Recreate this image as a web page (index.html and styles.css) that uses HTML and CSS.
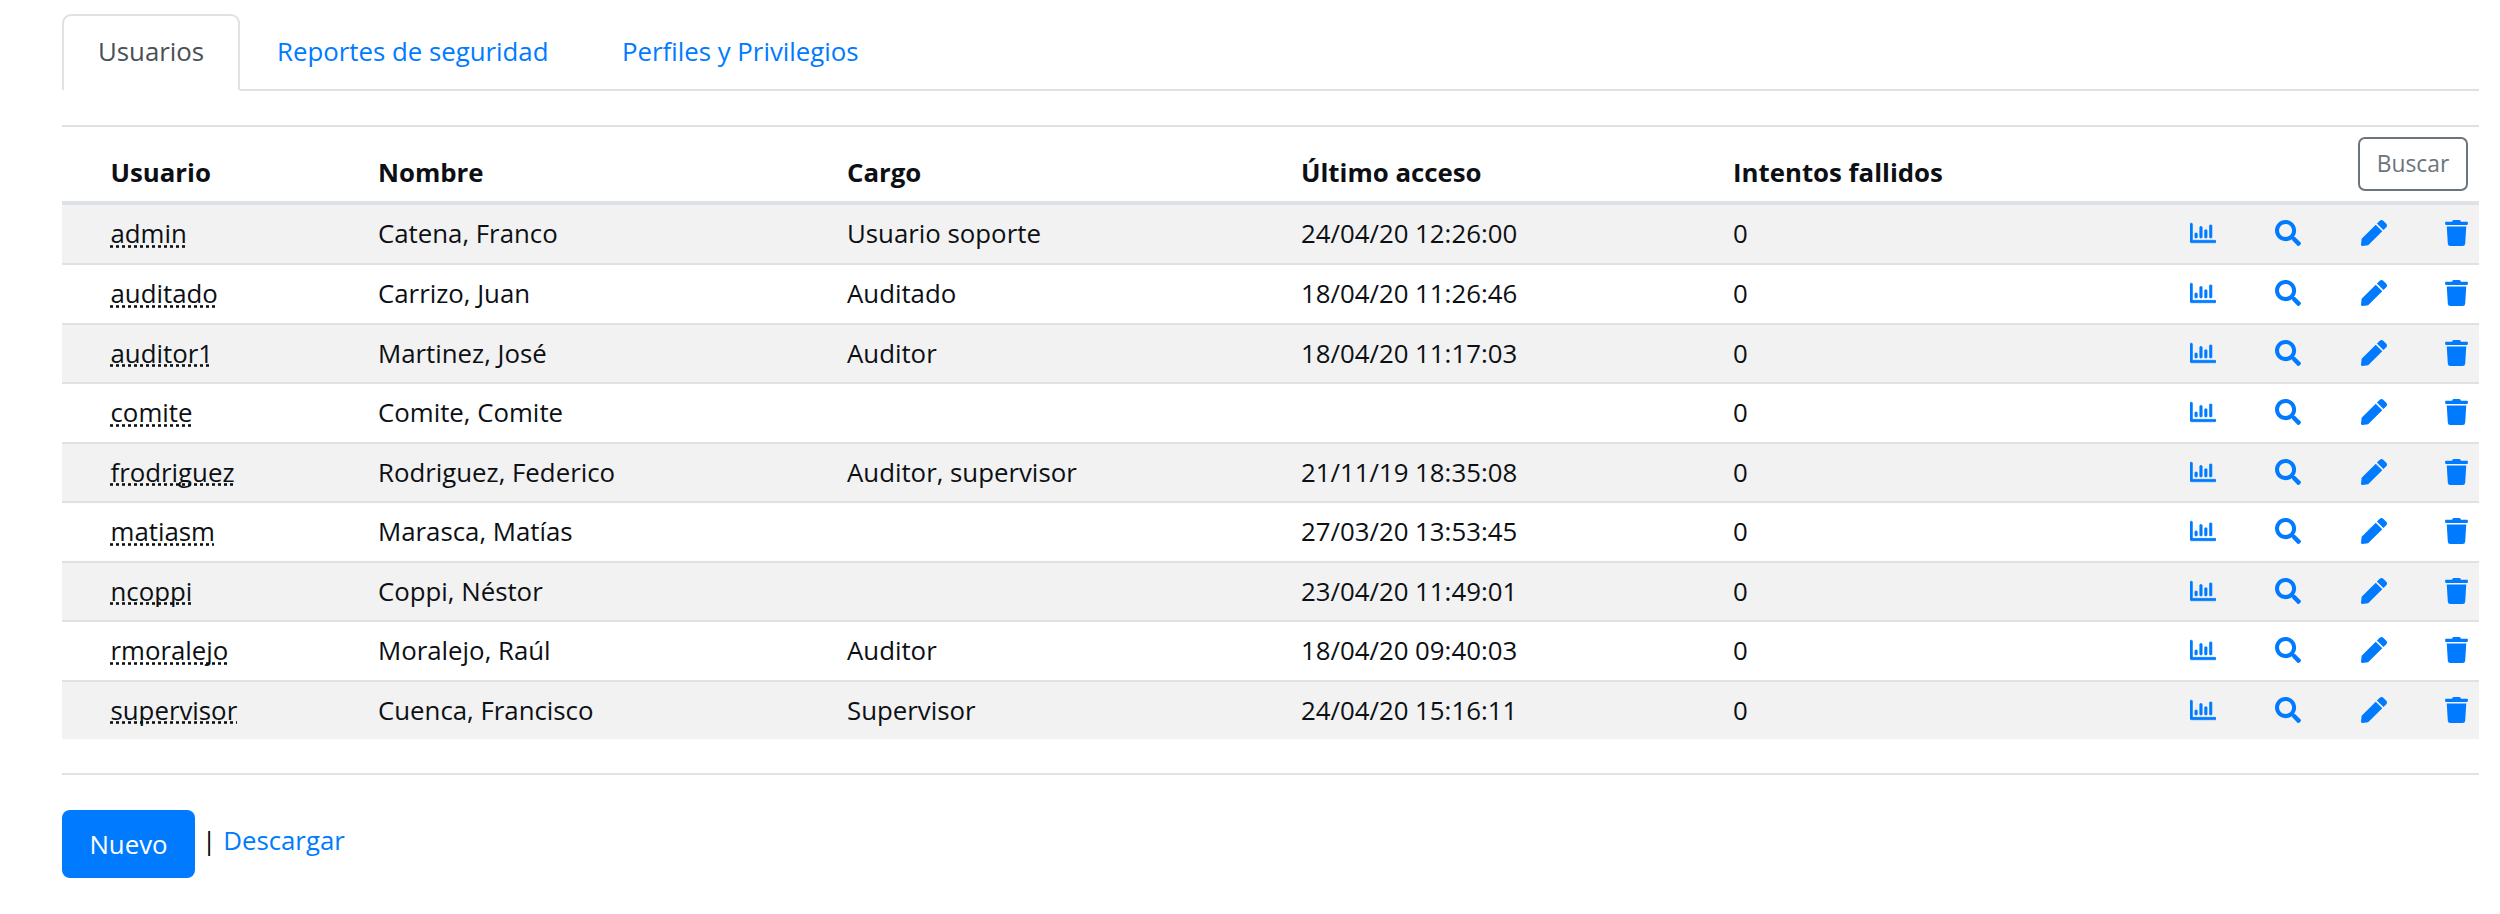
FILE: index.html
```html
<!DOCTYPE html>
<html lang="es">
<head>
<meta charset="utf-8">
<title>Usuarios</title>
<link rel="stylesheet" href="styles.css">
</head>
<body>
<svg class="sprite" aria-hidden="true">
<symbol id="chart" viewBox="0 0 512 512"><path d="M396.8 352h22.4c6.4 0 12.8-6.4 12.8-12.8V108.8c0-6.4-6.4-12.8-12.8-12.8h-22.4c-6.4 0-12.8 6.4-12.8 12.8v230.4c0 6.4 6.4 12.8 12.8 12.8zm-192 0h22.4c6.4 0 12.8-6.4 12.8-12.8V140.8c0-6.4-6.4-12.8-12.8-12.8h-22.4c-6.4 0-12.8 6.4-12.8 12.8v198.4c0 6.4 6.4 12.8 12.8 12.8zm96 0h22.4c6.4 0 12.8-6.4 12.8-12.8V204.8c0-6.4-6.4-12.8-12.8-12.8h-22.4c-6.4 0-12.8 6.4-12.8 12.8v134.4c0 6.4 6.4 12.8 12.8 12.8zM496 400H48V80c0-8.84-7.16-16-16-16H16C7.16 64 0 71.16 0 80v336c0 17.67 14.33 32 32 32h464c8.84 0 16-7.16 16-16v-16c0-8.84-7.16-16-16-16zm-387.2-48h22.4c6.4 0 12.8-6.4 12.8-12.8v-70.4c0-6.4-6.4-12.8-12.8-12.8h-22.4c-6.4 0-12.8 6.4-12.8 12.8v70.4c0 6.4 6.4 12.8 12.8 12.8z"/></symbol>
<symbol id="search" viewBox="0 0 512 512"><path d="M505 442.7L405.3 343c-4.500-4.500-10.600-7-17-7H372c27.600-35.300 44-79.700 44-128C416 93.100 322.900 0 208 0S0 93.100 0 208s93.100 208 208 208c48.300 0 92.700-16.400 128-44v16.300c0 6.400 2.500 12.500 7 17l99.700 99.700c9.400 9.400 24.600 9.400 33.900 0l28.300-28.300c9.400-9.400 9.400-24.600.1-34zM208 336c-70.700 0-128-57.200-128-128 0-70.700 57.200-128 128-128 70.700 0 128 57.200 128 128 0 70.700-57.200 128-128 128z"/></symbol>
<symbol id="pen" viewBox="0 0 512 512"><path d="M290.74 93.24l128.02 128.02-277.99 277.99-114.14 12.6C11.35 513.54-1.56 500.62.14 485.34l12.7-114.22 277.9-277.88zm207.2-19.06l-60.11-60.11c-18.75-18.75-49.16-18.75-67.91 0l-56.55 56.55 128.02 128.02 56.55-56.55c18.75-18.76 18.75-49.16 0-67.91z"/></symbol>
<symbol id="trash" viewBox="0 0 448 512"><path d="M432 32H312l-9.4-18.7A24 24 0 0 0 281.1 0H166.8a23.72 23.72 0 0 0-21.4 13.3L136 32H16A16 16 0 0 0 0 48v32a16 16 0 0 0 16 16h416a16 16 0 0 0 16-16V48a16 16 0 0 0-16-16zM53.2 467a48 48 0 0 0 47.9 45h245.8a48 48 0 0 0 47.9-45L416 128H32z"/></symbol>
</svg>
<main class="page">
<nav class="tabs"><a class="tab active">Usuarios</a><a class="tab">Reportes de seguridad</a><a class="tab">Perfiles y Privilegios</a></nav>
<section class="table">
<div class="row head"><b>Usuario</b><b>Nombre</b><b>Cargo</b><b>Último acceso</b><b>Intentos fallidos</b><button class="filter">Buscar</button></div>
<div id="rows"></div>
</section>
<hr class="rule">
<footer class="actions"><a class="primary">Nuevo</a><span class="bar">|</span><a class="link">Descargar</a></footer>
</main>
<script src="script.js"></script>
</body>
</html>
```
FILE: styles.css
```css
* { box-sizing: border-box; }
body { margin: 0; background: #fff; color: #0c1014; font: 400 25.8px/40px "Open Sans", "Noto Sans", sans-serif; }
.sprite { display: none; }
.page { width: 2417px; margin-left: 62px; padding-top: 14px; }
.tabs { display: flex; height: 77px; border-bottom: 2px solid #dee2e6; }
.tab { height: 77px; padding: 15px 34.5px 0 35px; border: 2px solid transparent; color: #007bff; white-space: nowrap; }
.active { width: 178px; padding-left: 34px; color: #495057; background: #fff; border-color: #dee2e6 #dee2e6 #fff; border-radius: 9px 9px 0 0; }
.table { margin-top: 34px; border-top: 2px solid #dee2e6; }
.row { display: grid; grid-template-columns: 267.5px 469px 454px 432px 457px 85px 86px 85px 1fr; height: 59.5px; padding: 0 0 1.5px 48.5px; border-top: 2px solid #dee2e6; align-items: center; white-space: nowrap; }
.row:nth-child(odd) { background: #f2f2f2; }
.row:first-child { height: 58px; border-top: 0; }
.row.head { height: 78px; background: none; border-bottom: 4px solid #dee2e6; padding: 18px 0 0 48.5px; align-items: start; }
.head b { line-height: 54px; font-weight: 700; }
.filter { grid-column: 6 / -1; justify-self: end; width: 110px; height: 54px; margin: -8px 11px 0 0; padding: 0; border: 2px solid #6c757d; border-radius: 7px; background: transparent; color: #6c757d; font: 400 22.8px/36px "Open Sans", "Noto Sans", sans-serif; }
.user { justify-self: start; text-decoration: underline dotted; text-decoration-skip-ink: none; }
.icon { width: 26px; height: 26px; fill: #007bff; }
.chart { stroke: #007bff; stroke-width: 12px; }
.trash { width: 23px; margin-left: -1px; }
.rule { height: 2px; margin: 34px 0; border: 0; background: #e2e2e2; }
.actions { display: flex; }
.primary { width: 133px; height: 68px; margin-top: 1px; border-radius: 8px; background: #007bff; color: #fff; line-height: 69px; text-align: center; }
.bar { margin: 11px 0 0 7px; color: #000; }
.link { margin: 11px 0 0 7px; color: #007bff; }
```
FILE: script.js
```
const users = [
  ["admin", "Catena, Franco", "Usuario soporte", "24/04/20 12:26:00"],
  ["auditado", "Carrizo, Juan", "Auditado", "18/04/20 11:26:46"],
  ["auditor1", "Martinez, José", "Auditor", "18/04/20 11:17:03"],
  ["comite", "Comite, Comite", "", ""],
  ["frodriguez", "Rodriguez, Federico", "Auditor, supervisor", "21/11/19 18:35:08"],
  ["matiasm", "Marasca, Matías", "", "27/03/20 13:53:45"],
  ["ncoppi", "Coppi, Néstor", "", "23/04/20 11:49:01"],
  ["rmoralejo", "Moralejo, Raúl", "Auditor", "18/04/20 09:40:03"],
  ["supervisor", "Cuenca, Francisco", "Supervisor", "24/04/20 15:16:11"]
];
document.getElementById("rows").innerHTML = users.map(([user, name, role, access]) =>
  `<div class="row"><span class="user">${user}</span><span>${name}</span><span>${role}</span><span>${access}</span><span>0</span>` +
  ["chart", "search", "pen", "trash"].map(i => `<svg class="icon ${i}"><use href="#${i}"/></svg>`).join("") + "</div>"
).join("");
```
